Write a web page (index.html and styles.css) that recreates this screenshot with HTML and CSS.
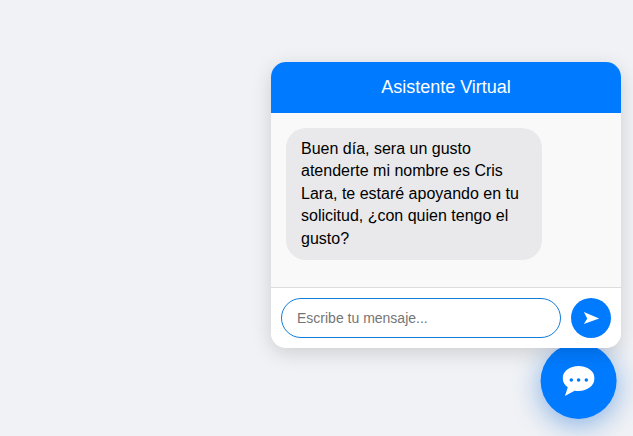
FILE: index.html
```html
<!DOCTYPE html>
<html lang="es">
<head>
<meta charset="utf-8">
<title>Asistente Virtual</title>
<link rel="stylesheet" href="styles.css">
</head>
<body>
<section class="chat">
  <header class="chat-header">Asistente Virtual</header>
  <div class="chat-body">
    <div class="bubble">Buen día, sera un gusto atenderte mi nombre es Cris Lara, te estaré apoyando en tu solicitud, ¿con quien tengo el gusto?</div>
  </div>
  <form class="chat-input">
    <input class="field" type="text" placeholder="Escribe tu mensaje...">
    <button class="send" type="button" aria-label="Enviar">
      <svg viewBox="0 0 20 16" width="17" height="14"><path d="M1 1 L19 8.500 L1 15 L5 8.500 Z" fill="#fff"/></svg>
    </button>
  </form>
</section>
<button class="fab" type="button" aria-label="Abrir chat">
  <svg viewBox="0 0 32 30" width="32" height="30">
    <path d="M16 0C7.200 0 0 5.400 0 12.200c0 3.600 2 6.800 5.200 9L2.300 30l9.700-5.300c1.300.2 2.600.3 4 .3 8.800 0 16-5.700 16-12.800S24.800 0 16 0z" fill="#fff"/>
    <circle cx="8.700" cy="14" r="1.800" fill="#007bff"/>
    <circle cx="16" cy="14" r="1.800" fill="#007bff"/>
    <circle cx="23.700" cy="14" r="1.800" fill="#007bff"/>
  </svg>
</button>
</body>
</html>
```
FILE: styles.css
```css
* { box-sizing: border-box; }
html, body { height: 100%; }
body {
  margin: 0;
  background: #f0f2f5;
  font-family: "Liberation Sans", Arial, sans-serif;
  overflow: hidden;
}
.chat {
  position: absolute;
  left: 271px;
  top: 62px;
  width: 350px;
  z-index: 2;
  display: flex;
  flex-direction: column;
  background: #fff;
  border-radius: 15px;
  overflow: hidden;
  box-shadow: 0 5px 20px rgba(0, 0, 0, 0.15);
}
.chat-header {
  background: #007bff;
  color: #fff;
  font-size: 18px;
  line-height: 21px;
  padding: 15px;
  text-align: center;
}
.chat-body {
  height: 174px;
  padding: 15px;
  background: #f9f9f9;
}
.bubble {
  width: 256px;
  padding: 10px 15px;
  font-size: 16px;
  line-height: 22.4px;
  color: #000;
  background: #e9e9eb;
  border-radius: 20px;
}
.chat-input {
  display: flex;
  gap: 10px;
  padding: 10px;
  background: #fff;
  border-top: 1px solid #ddd;
}
.field {
  flex: 1;
  min-width: 0;
  height: 40px;
  padding: 0 15px;
  font-family: inherit;
  font-size: 14px;
  border: 1px solid #127cdb;
  border-radius: 20px;
  outline: none;
  background: #fff;
}
.field::placeholder { color: #757575; opacity: 1; }
.send {
  flex: none;
  width: 40px;
  height: 40px;
  padding: 0;
  border: 0;
  border-radius: 50%;
  background: #007bff;
  display: flex;
  align-items: center;
  justify-content: center;
}
.fab {
  position: absolute;
  left: 541px;
  top: 343px;
  width: 76px;
  height: 76px;
  padding: 0;
  border: 0;
  border-radius: 50%;
  background: #007bff;
  display: flex;
  align-items: center;
  justify-content: center;
  box-shadow: 0 6px 28px rgba(0, 95, 210, 0.45);
  transform: translate(-0.4px, 0);
}
```
